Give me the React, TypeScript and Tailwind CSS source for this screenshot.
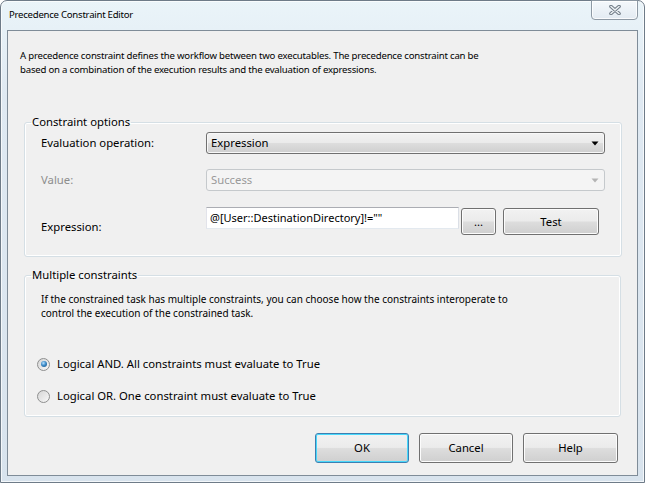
import React from 'react';

const font = "font-['Noto_Sans',sans-serif]";

const btnBg =
  'bg-[linear-gradient(to_bottom,#f2f2f2_0%,#ebebeb_48%,#dddddd_52%,#cfcfcf_100%)]';

function WinButton({ label, w, focused }: { label: string; w: string; focused?: boolean }) {
  return (
    <button
      className={`${w} flex items-center justify-center rounded-[3px] border ${
        focused
          ? 'border-[#3c7fb1] shadow-[inset_0_0_0_1px_#48d8fb]'
          : 'border-[#707070] shadow-[inset_0_0_0_1px_#fcfcfc]'
      } ${btnBg} text-[11.3px] leading-[14px] text-black`}
    >
      {label}
    </button>
  );
}

function Combo({ value, disabled }: { value: string; disabled?: boolean }) {
  return (
    <div
      className={`flex h-[22px] w-[399px] items-center justify-between rounded-[3px] border pl-[4px] pr-[5px] ${
        disabled
          ? 'border-[#c5c9cc] bg-[#f4f4f4] text-[#9a9a9a]'
          : `border-[#707070] ${btnBg} text-black shadow-[inset_0_0_0_1px_#f8f8f8]`
      }`}
    >
      <span>{value}</span>
      <svg width="8" height="5" viewBox="0 0 8 5">
        <path d="M0.5 0.5 L7.5 0.5 L4 4.5 Z" fill={disabled ? '#b4b4b4' : '#000'} />
      </svg>
    </div>
  );
}

function Radio({ checked, label }: { checked?: boolean; label: string }) {
  return (
    <label className="flex h-[14px] items-center">
      <span className="flex h-[13px] w-[13px] items-center justify-center rounded-full border border-[#8e8f8f] bg-[linear-gradient(135deg,#d6d6d6,#f8f8f8)]">
        {checked && (
          <span className="h-[6px] w-[6px] rounded-full bg-[radial-gradient(circle_at_40%_35%,#b8e2ff_0%,#3d8bc8_45%,#1d4f7c_100%)]" />
        )}
      </span>
      <span className="ml-[7px]">{label}</span>
    </label>
  );
}

export default function App() {
  return (
    <div className={`h-[483px] w-[645px] bg-white ${font} text-[11.3px] leading-[14px] text-black`}>
      <div className="flex h-full w-full flex-col rounded-t-[7px] border border-[#6e7b88] bg-[linear-gradient(to_bottom,#eaf4f9,#dfe9f2_20%,#d8e3ed)] px-[6px] pb-[6px] shadow-[inset_0_0_0_1px_rgba(255,255,255,0.7)]">
        {/* title bar */}
        <div className="flex h-[29px] items-start justify-between">
          <span className="pl-[2px] pt-[7px] text-[9.6px] tracking-[-0.25px]">Precedence Constraint Editor</span>
          <div className="-mt-px flex h-[20px] w-[47px] items-center justify-center rounded-b-[4px] border border-[#8d99a4] bg-[linear-gradient(to_bottom,#f4f8fb,#e3ebf2)] shadow-[inset_0_0_0_1px_rgba(255,255,255,0.8)]">
            <svg width="12" height="10" viewBox="0 0 12 10">
              <path d="M2 1.5 L10 8.5 M10 1.5 L2 8.5" stroke="#6f7a85" strokeWidth="3.6" strokeLinecap="round" />
              <path d="M2 1.5 L10 8.5 M10 1.5 L2 8.5" stroke="#eef2f5" strokeWidth="1.6" strokeLinecap="round" />
            </svg>
          </div>
        </div>

        {/* client area */}
        <div className="flex flex-1 flex-col border border-[#7f8c98] bg-[#f0f0f0]">
          <div className="mt-[18px] pl-[12px] whitespace-nowrap text-[9.6px] tracking-[-0.2px]">
            <div>A precedence constraint defines the workflow between two executables. The precedence constraint can be</div>
            <div>based on a combination of the execution results and the evaluation of expressions.</div>
          </div>

          {/* Constraint options */}
          <fieldset className="ml-[16px] mt-[38px] w-[597px] rounded-[3px] border border-[#d5dfe5] pl-[6px] pr-[16px] pb-[21px] shadow-[inset_0_0_0_1px_#fff]">
            <legend className="px-[1px]">Constraint options</legend>
            <div className="mt-[3px] flex h-[22px] items-center">
              <span className="ml-[10px] w-[165px]">Evaluation operation:</span>
              <Combo value="Expression" />
            </div>
            <div className="mt-[15px] flex h-[22px] items-center">
              <span className="ml-[10px] w-[165px] text-[#8d8d8d]">Value:</span>
              <Combo value="Success" disabled />
            </div>
            <div className="mt-[16px] flex h-[28px] items-start">
              <span className="ml-[10px] mt-[13px] w-[165px]">Expression:</span>
              <div className="flex h-[22px] w-[253px] items-center border border-[#abadb3] border-b-[#e3e9ef] border-l-[#e2e3ea] border-r-[#dbdfe6] bg-white pl-[3px] text-[11px]">
                @[User::DestinationDirectory]!=""
              </div>
              <div className="ml-[2px] mt-px flex h-[27px]">
                <WinButton label="..." w="w-[35px]" />
              </div>
              <div className="ml-[7px] mt-px flex h-[27px]">
                <WinButton label="Test" w="w-[96px]" />
              </div>
            </div>
          </fieldset>

          {/* Multiple constraints */}
          <fieldset className="ml-[16px] mt-[11px] w-[597px] rounded-[3px] border border-[#d5dfe5] pl-[6px] pb-[13px] shadow-[inset_0_0_0_1px_#fff]">
            <legend className="px-[1px]">Multiple constraints</legend>
            <div className="mt-[10px] ml-[10px] whitespace-nowrap text-[10px]">
              <div>If the constrained task has multiple constraints, you can choose how the constraints interoperate to</div>
              <div>control the execution of the constrained task.</div>
            </div>
            <div className="ml-[6px] mt-[37px]">
              <Radio checked label="Logical AND. All constraints must evaluate to True" />
            </div>
            <div className="ml-[6px] mt-[18px]">
              <Radio label="Logical OR. One constraint must evaluate to True" />
            </div>
          </fieldset>

          {/* dialog buttons */}
          <div className="mt-[16px] flex h-[30px] justify-end gap-[10px] pr-[19px]">
            <WinButton label="OK" w="w-[94px]" focused />
            <WinButton label="Cancel" w="w-[94px]" />
            <WinButton label="Help" w="w-[95px]" />
          </div>
        </div>
      </div>
    </div>
  );
}
